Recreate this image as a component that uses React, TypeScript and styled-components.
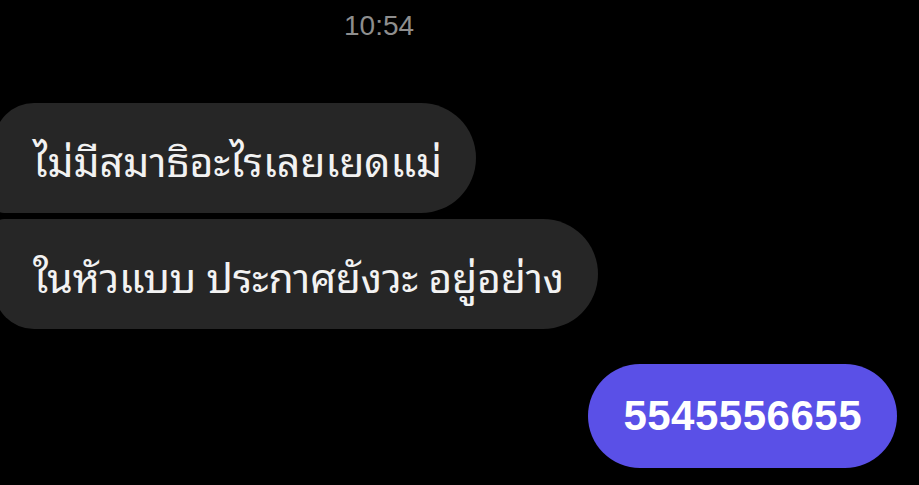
import React from "react";
import styled, { createGlobalStyle } from "styled-components";

const Global = createGlobalStyle`
  html, body { margin: 0; padding: 0; background: #000; }
  body { width: 919px; height: 485px; overflow: hidden; font-family: "Noto Sans", "Liberation Sans", sans-serif; }
`;

const Screen = styled.div`
  width: 919px;
  height: 485px;
  background: #000;
  display: flex;
  flex-direction: column;
`;

const Time = styled.div`
  align-self: flex-start;
  margin: 10px 0 0 344px;
  font-family: "Liberation Sans", Arial, sans-serif;
  font-size: 28px;
  line-height: 32px;
  color: #8e8e8e;
`;

const Group = styled.div`
  display: flex;
  flex-direction: column;
  gap: 6px;
  margin-top: 61px;
`;

const Bubble = styled.div<{ $first?: boolean; $last?: boolean }>`
  align-self: flex-start;
  margin-left: -6px;
  height: 110px;
  box-sizing: border-box;
  display: flex;
  align-items: center;
  padding: 0 34px 0 39px;
  background: #262626;
  color: #f2f2f2;
  font-family: "Noto Sans Thai Looped", "Noto Sans Thai", "Noto Sans", "DejaVu Sans", sans-serif;
  font-size: 41px;
  letter-spacing: ${(p) => (p.$last ? "-0.2px" : "0")};
  white-space: nowrap;
  border-radius: ${(p) => (p.$first ? "40px" : "10px")} 55px 55px ${(p) => (p.$last ? "40px" : "10px")};
`;

const Outgoing = styled.div`
  align-self: flex-end;
  margin: 35px 22px 0 0;
  height: 104px;
  box-sizing: border-box;
  padding: 0 35px;
  display: flex;
  align-items: center;
  background: #5a50e7;
  color: #fff;
  border-radius: 52px;
  font-family: "Liberation Sans", Arial, sans-serif;
  font-weight: 700;
  font-size: 42px;
  letter-spacing: 0.5px;
`;

export default function App() {
  return (
    <Screen>
      <Global />
      <Time>10:54</Time>
      <Group>
        <Bubble $first>ไม่มีสมาธิอะไรเลยเยดแม่</Bubble>
        <Bubble $last>ในหัวแบบ ประกาศยังวะ อยู่อย่าง</Bubble>
      </Group>
      <Outgoing>5545556655</Outgoing>
    </Screen>
  );
}
